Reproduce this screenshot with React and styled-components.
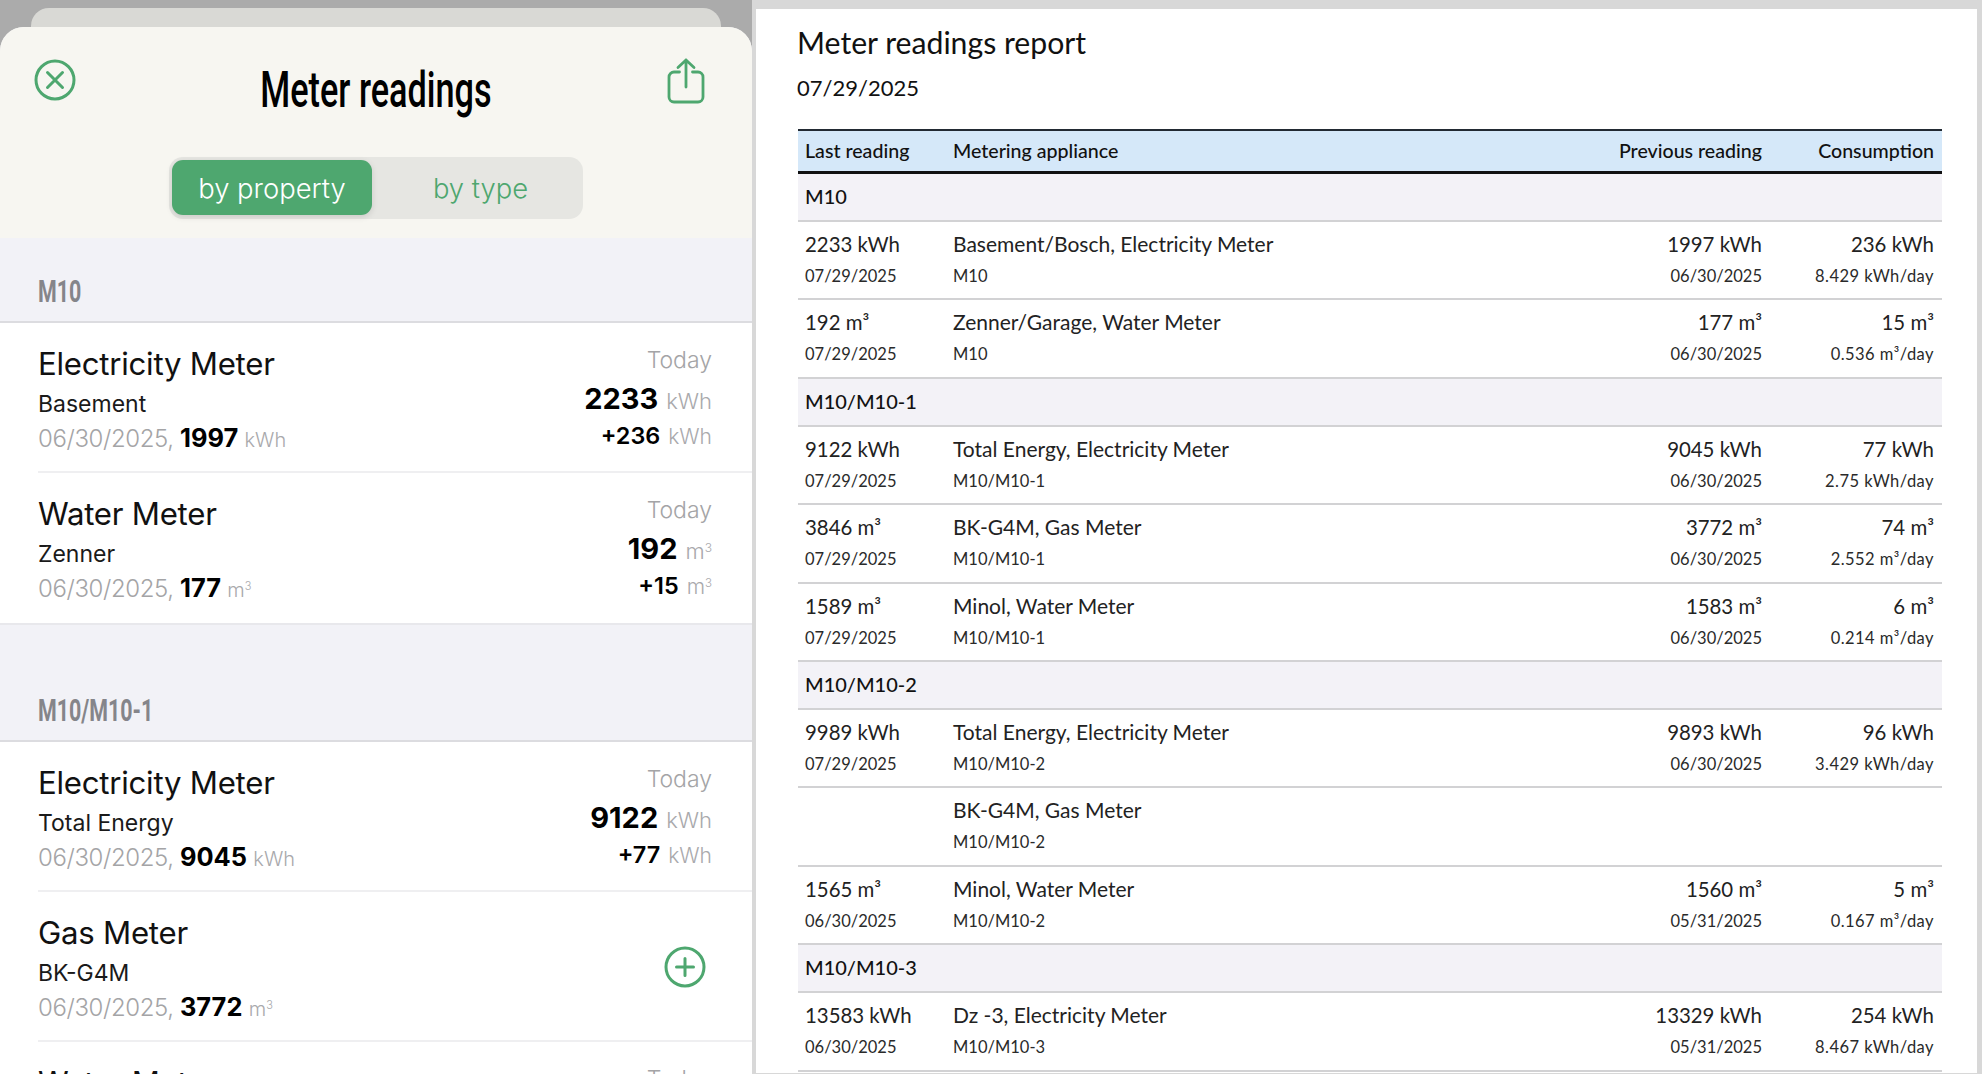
import React from "react";
import styled, { createGlobalStyle } from "styled-components";

const Global = createGlobalStyle`
  html, body { margin: 0; padding: 0; height: 1074px; overflow: hidden; background: #d8d8d8; }
  #root { height: 1074px; }
  * { box-sizing: border-box; }
`;

const Page = styled.div`
  display: flex;
  height: 1074px;
  overflow: hidden;
  background: #d8d8d8;
`;

/* ---------- left: phone sheet ---------- */
const LeftPane = styled.section`
  width: 752px;
  flex: none;
  height: 1074px;
  overflow: hidden;
  background: linear-gradient(#ababab 0 60px, #fff 60px);
  padding-top: 8px;
  font-family: Inter, "Liberation Sans", sans-serif;
`;
const PeekCard = styled.div`
  height: 19px;
  margin: 0 31px;
  background: #d9d9d5;
  border-radius: 18px 18px 0 0;
`;
const Sheet = styled.div`
  height: 1047px;
  background: #f2f2f7;
  border-radius: 24px 24px 0 0;
  overflow: hidden;
`;
const SheetHeader = styled.header`
  height: 211px;
  background: #f7f6f1;
  padding: 0 34px;
  display: flex;
  flex-direction: column;
`;
const TitleBar = styled.div`
  display: grid;
  grid-template-columns: 1fr auto 1fr;
  align-items: start;
  height: 130px;
`;
const Title = styled.h1`
  margin: 29px 0 0;
  font: 500 50px/68px Roboto, "Liberation Sans", sans-serif;
  color: #000;
  transform: scaleX(0.685);
  white-space: nowrap;
`;
const IconSlot = styled.div`
  color: #4ea76f;
  padding-top: ${(p) => p.$top}px;
  margin-right: ${(p) => p.$mr || 0}px;
  justify-self: ${(p) => p.$end ? "end" : "start"};
  display: flex;
`;
const Segments = styled.div`
  align-self: center;
  display: flex;
  width: 414px;
  height: 62px;
  padding: 3px;
  background: #e6e6e2;
  border-radius: 14px;
`;
const Segment = styled.div`
  flex: ${(p) => (p.$active ? "0 0 200px" : "1")};
  height: 55px;
  display: flex;
  align-items: center;
  justify-content: center;
  padding-left: ${(p) => (p.$active ? 0 : 9)}px;
  font-size: 27.4px;
  font-weight: 300;
  border-radius: 11px;
  color: ${(p) => (p.$active ? "#fff" : "#4ea76f")};
  background: ${(p) => (p.$active ? "#4ea76f" : "transparent")};
  box-shadow: ${(p) => (p.$active ? "0 2px 6px rgba(0,0,0,.12)" : "none")};
`;
const Section = styled.div`
  background: #fff;
  border-bottom: ${(p) => (p.$open ? "none" : "2px solid #e8e8ec")};
`;
const SectionHead = styled.div`
  background: #f2f2f7;
  height: ${(p) => p.$height}px;
  padding: ${(p) => p.$height - 49}px 38px 0;
  border-bottom: 2px solid #dcdce0;
`;
const SectionTitle = styled.span`
  display: inline-block;
  font: 700 31.5px/36px Roboto, "Liberation Sans", sans-serif;
  color: #85858a;
  transform: scaleX(0.68);
  transform-origin: left center;
  white-space: nowrap;
`;
const MeterRow = styled.div`
  height: ${(p) => (p.$cut ? 60 : 150)}px;
  margin-left: 38px;
  padding: 20px 40px 0 0;
  display: flex;
  justify-content: space-between;
  border-bottom: ${(p) => (p.$last ? "none" : "2px solid #efeff1")};
`;
const MeterInfo = styled.div`
  display: flex;
  flex-direction: column;
`;
const MeterName = styled.div`
  font-size: 31.2px;
  line-height: 42px;
  font-weight: 400;
  color: #111;
  letter-spacing: -0.25px;
`;
const MeterSub = styled.div`
  font-size: 23px;
  line-height: 38px;
  color: #1a1a1a;
  font-weight: 400;
`;
const MeterPrev = styled.div`
  font-size: 24px;
  line-height: 36px;
  margin-top: -3px;
  color: #a4a4a6;
  font-weight: 300;
  letter-spacing: -0.4px;
`;
const Strong = styled.b`
  color: #000;
  font-size: 25.4px;
  font-weight: 700;
  letter-spacing: 0;
`;
const Unit = styled.span`
  color: #a9a9ac;
  font-weight: 300;
  letter-spacing: 0;
  font-size: ${(p) => p.$size || 20}px;
  sup { font-size: 0.55em; line-height: 0; vertical-align: 0.6em; }
`;
const MeterValues = styled.div`
  display: flex;
  flex-direction: column;
  align-items: flex-end;
`;
const Today = styled.div`
  font-size: 23px;
  line-height: 32px;
  color: #a4a4a6;
  font-weight: 300;
  margin-top: -1px;
  padding-top: 2px;
`;
const BigValue = styled.div`
  font-size: 29px;
  line-height: 46px;
  font-weight: 700;
  color: #000;
  display: flex;
  align-items: baseline;
  gap: 8px;
`;
const Delta = styled.div`
  font-size: 23.4px;
  line-height: 26px;
  margin-top: -1px;
  font-weight: 600;
  color: #000;
  display: flex;
  align-items: baseline;
  gap: 8px;
`;
const AddWrap = styled.div`
  color: #4ea76f;
  display: flex;
  margin: 34px 6px 0 0;
`;

/* ---------- divider ---------- */
const Divider = styled.div`
  width: 4px;
  flex: none;
  background: #d8d8d8;
`;

/* ---------- right: report ---------- */
const Report = styled.section`
  width: 1221px;
  flex: none;
  height: 1064px;
  margin-top: 9px;
  padding: 0 35px 0 42px;
  background: #fff;
  overflow: hidden;
  font-family: Lato, "Open Sans", sans-serif;
  color: #1c1c1c;
`;
const ReportTitle = styled.h2`
  margin: 13px 0 0 -1px;
  font-size: 30.2px;
  line-height: 40px;
  font-weight: 400;
  color: #111;
`;
const ReportDate = styled.div`
  font-size: 22px;
  line-height: 30px;
  margin: 11px 0 0 -1px;
  color: #111;
`;
const Table = styled.div`
  margin-top: 26px;
  display: flex;
  flex-direction: column;
`;
const TRow = styled.div`
  display: grid;
  grid-template-columns: 148px 1fr 180px 172px;
  align-items: start;
`;
const HeadRow = styled(TRow)`
  background: #d5e8f9;
  border-top: 2px solid #222a33;
  border-bottom: 3px solid #111;
  height: 45px;
  padding-bottom: 1px;
  align-items: center;
  font-size: 19.6px;
  font-weight: 500;
  color: #111;
`;
const HeadCell = styled.div`
  padding: ${(p) => (p.$right ? "0 8px" : "0 7px")};
  white-space: nowrap;
  text-align: ${(p) => (p.$right ? "right" : "left")};
`;
const GroupRow = styled.div`
  height: 48px;
  background: #f3f2f7;
  border-bottom: 2px solid #d2d2d4;
  padding: 0 7px 2px;
  display: flex;
  align-items: center;
  font-size: 20px;
  font-weight: 500;
  color: #111;
`;
const DataRow = styled(TRow)`
  height: 78.4px;
  border-bottom: 2px solid #d2d2d4;
  padding-top: 7px;
`;
const Cell = styled.div`
  padding: ${(p) => (p.$right ? "0 8px" : "0 7px")};
  text-align: ${(p) => (p.$right ? "right" : "left")};
  white-space: nowrap;
`;
const Main = styled.div`
  font-size: ${(p) => (p.$name ? 21 : 20.4)}px;
  line-height: 30px;
  color: #222;
`;
const Second = styled.div`
  font-size: 16.5px;
  line-height: 28px;
  margin-top: 3px;
  color: #2a2a2a;
  letter-spacing: ${(p) => (p.$wide ? 0.45 : 0)}px;
`;

/* ---------- icons ---------- */
const CloseIcon = () => (
  <svg width="42" height="42" viewBox="0 0 42 42" fill="none" stroke="currentColor" strokeWidth="3" strokeLinecap="round">
    <circle cx="21" cy="21" r="19" />
    <path d="M13.5 13.5 28.5 28.5M28.5 13.5 13.5 28.5" />
  </svg>
);
const ShareIcon = () => (
  <svg width="38" height="46" viewBox="0 0 38 46" fill="none" stroke="currentColor" strokeWidth="2.8" strokeLinecap="round" strokeLinejoin="round">
    <path d="M12.5 14H7a5 5 0 0 0-5 5v20a5 5 0 0 0 5 5h24a5 5 0 0 0 5-5V19a5 5 0 0 0-5-5h-5.5" />
    <path d="M19 29V2M11 9.5 19 2l8 7.5" />
  </svg>
);
const PlusIcon = () => (
  <svg width="42" height="42" viewBox="0 0 42 42" fill="none" stroke="currentColor" strokeWidth="3" strokeLinecap="round">
    <circle cx="21" cy="21" r="19" />
    <path d="M21 12.5v17M12.5 21h17" />
  </svg>
);

const M3 = () => <>m<sup>3</sup></>;
const unitText = (unit) => (unit === "m3" ? <M3 /> : unit);

const MeterCard = ({ name, sub, date, prev, unit, value, delta, add, last, cut }) => (
  <MeterRow $last={last || cut} $cut={cut}>
    <MeterInfo>
      <MeterName>{name}</MeterName>
      {!cut && <MeterSub>{sub}</MeterSub>}
      {!cut && (
        <MeterPrev>
          {date}, <Strong>{prev}</Strong> <Unit>{unitText(unit)}</Unit>
        </MeterPrev>
      )}
    </MeterInfo>
    {add ? (
      <AddWrap><PlusIcon /></AddWrap>
    ) : (
      <MeterValues>
        <Today>Today</Today>
        {value && <BigValue>{value} <Unit $size={22}>{unitText(unit)}</Unit></BigValue>}
        {delta && <Delta>{delta} <Unit $size={21}>{unitText(unit)}</Unit></Delta>}
      </MeterValues>
    )}
  </MeterRow>
);

const report = [
  { group: "M10", rows: [
    ["2233 kWh", "07/29/2025", "Basement/Bosch, Electricity Meter", "1997 kWh", "06/30/2025", "236 kWh", "8.429 kWh/day"],
    ["192 m³", "07/29/2025", "Zenner/Garage, Water Meter", "177 m³", "06/30/2025", "15 m³", "0.536 m³/day"],
  ]},
  { group: "M10/M10-1", rows: [
    ["9122 kWh", "07/29/2025", "Total Energy, Electricity Meter", "9045 kWh", "06/30/2025", "77 kWh", "2.75 kWh/day"],
    ["3846 m³", "07/29/2025", "BK-G4M, Gas Meter", "3772 m³", "06/30/2025", "74 m³", "2.552 m³/day"],
    ["1589 m³", "07/29/2025", "Minol, Water Meter", "1583 m³", "06/30/2025", "6 m³", "0.214 m³/day"],
  ]},
  { group: "M10/M10-2", rows: [
    ["9989 kWh", "07/29/2025", "Total Energy, Electricity Meter", "9893 kWh", "06/30/2025", "96 kWh", "3.429 kWh/day"],
    ["", "", "BK-G4M, Gas Meter", "", "", "", ""],
    ["1565 m³", "06/30/2025", "Minol, Water Meter", "1560 m³", "05/31/2025", "5 m³", "0.167 m³/day"],
  ]},
  { group: "M10/M10-3", rows: [
    ["13583 kWh", "06/30/2025", "Dz -3, Electricity Meter", "13329 kWh", "05/31/2025", "254 kWh", "8.467 kWh/day"],
  ]},
];

export default function App() {
  return (
    <Page>
      <Global />
      <LeftPane>
        <PeekCard />
        <Sheet>
          <SheetHeader>
            <TitleBar>
              <IconSlot $top={32}><CloseIcon /></IconSlot>
              <Title>Meter readings</Title>
              <IconSlot $top={31} $mr={13} $end><ShareIcon /></IconSlot>
            </TitleBar>
            <Segments>
              <Segment $active>by property</Segment>
              <Segment>by type</Segment>
            </Segments>
          </SheetHeader>
          <Section>
            <SectionHead $height={85}><SectionTitle>M10</SectionTitle></SectionHead>
            <MeterCard name="Electricity Meter" sub="Basement" date="06/30/2025" prev="1997" unit="kWh" value="2233" delta="+236" />
            <MeterCard name="Water Meter" sub="Zenner" date="06/30/2025" prev="177" unit="m3" value="192" delta="+15" last />
          </Section>
          <Section $open>
            <SectionHead $height={117}><SectionTitle>M10/M10-1</SectionTitle></SectionHead>
            <MeterCard name="Electricity Meter" sub="Total Energy" date="06/30/2025" prev="9045" unit="kWh" value="9122" delta="+77" />
            <MeterCard name="Gas Meter" sub="BK-G4M" date="06/30/2025" prev="3772" unit="m3" add />
            <MeterCard name="Water Meter" cut />
          </Section>
        </Sheet>
      </LeftPane>
      <Divider />
      <Report>
        <ReportTitle>Meter readings report</ReportTitle>
        <ReportDate>07/29/2025</ReportDate>
        <Table>
          <HeadRow>
            <HeadCell>Last reading</HeadCell>
            <HeadCell>Metering appliance</HeadCell>
            <HeadCell $right>Previous reading</HeadCell>
            <HeadCell $right>Consumption</HeadCell>
          </HeadRow>
          {report.map((g) => (
            <React.Fragment key={g.group}>
              <GroupRow>{g.group}</GroupRow>
              {g.rows.map((r, i) => (
                <DataRow key={i}>
                  <Cell><Main>{r[0]}</Main><Second>{r[1]}</Second></Cell>
                  <Cell><Main $name>{r[2]}</Main><Second>{g.group}</Second></Cell>
                  <Cell $right><Main>{r[3]}</Main><Second>{r[4]}</Second></Cell>
                  <Cell $right><Main>{r[5]}</Main><Second $wide>{r[6]}</Second></Cell>
                </DataRow>
              ))}
            </React.Fragment>
          ))}
        </Table>
      </Report>
    </Page>
  );
}
